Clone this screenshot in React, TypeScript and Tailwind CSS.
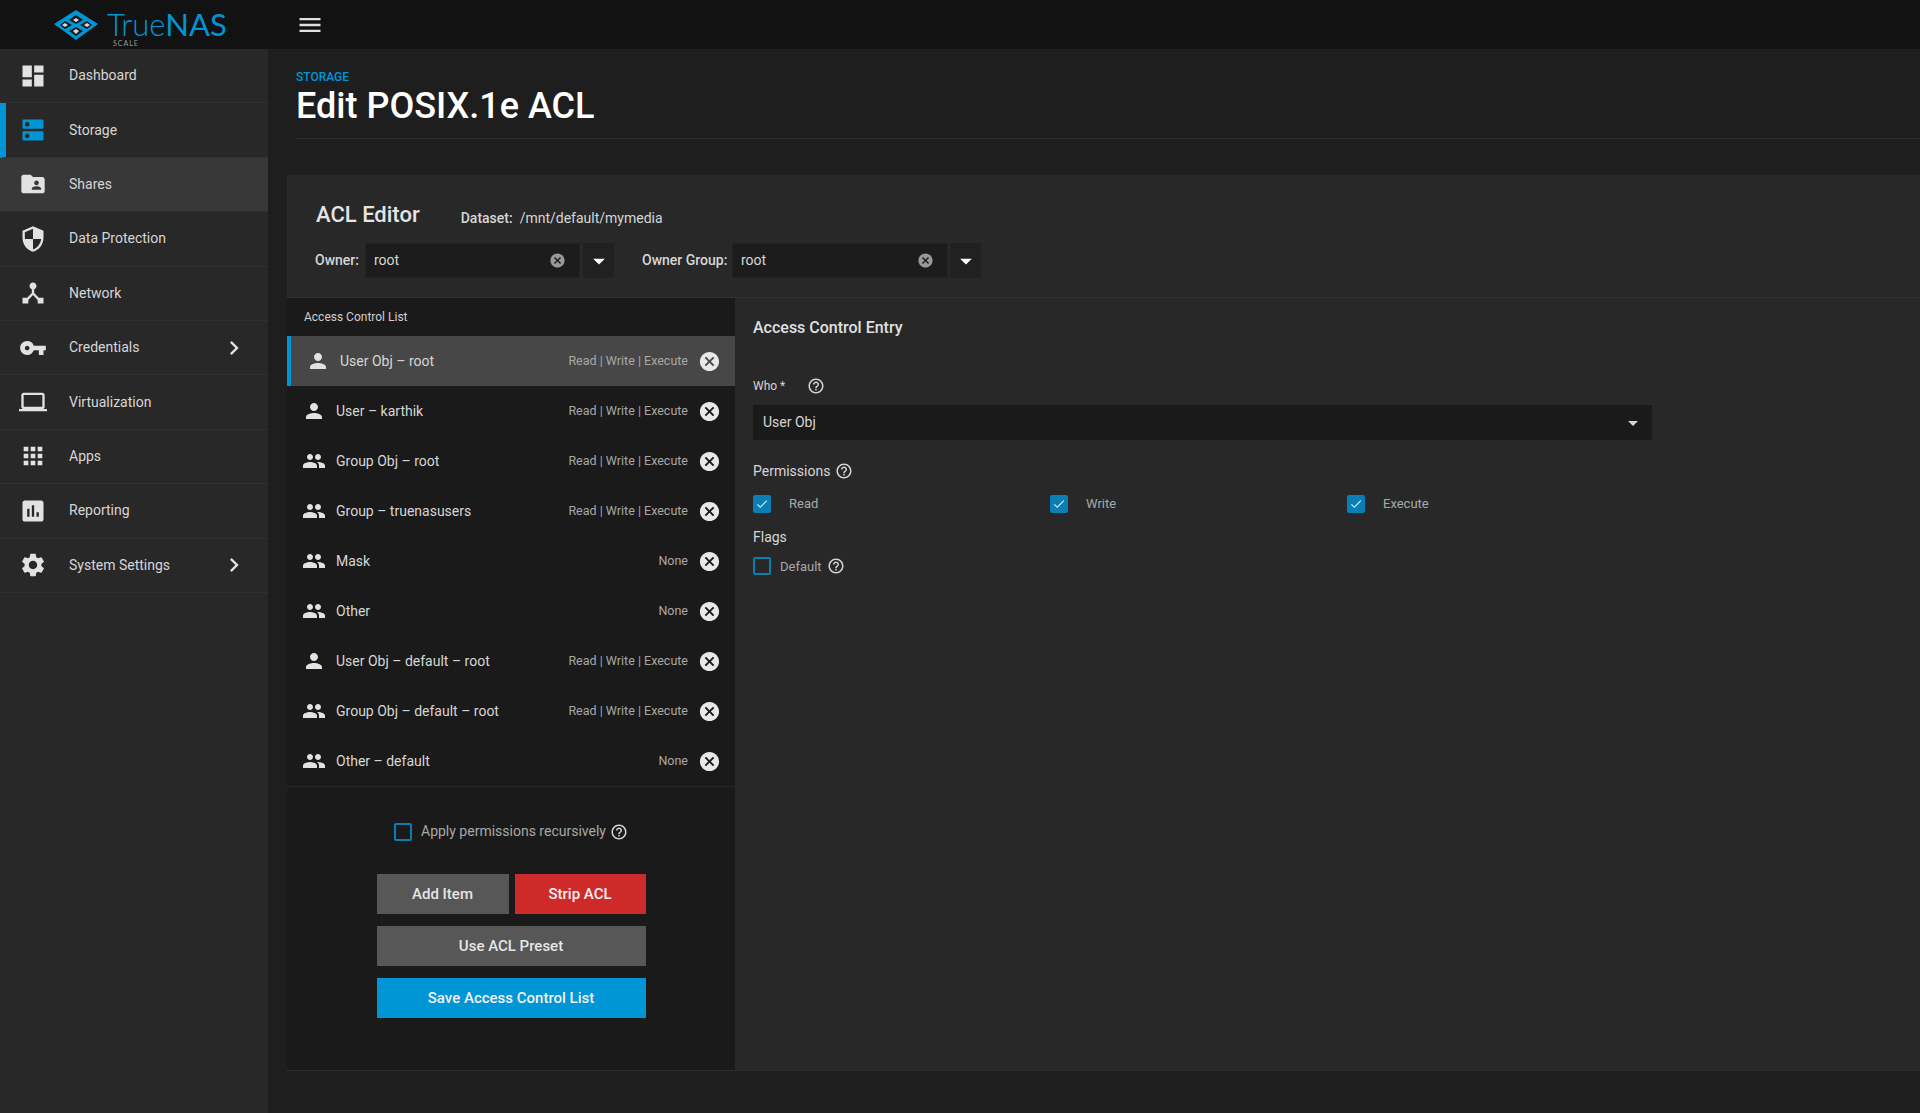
import React from 'react';
import {
  MdDashboard,
  MdDns,
  MdFolderShared,
  MdSecurity,
  MdDeviceHub,
  MdVpnKey,
  MdLaptop,
  MdApps,
  MdInsertChart,
  MdSettings,
  MdChevronRight,
  MdPerson,
  MdPeople,
  MdCancel,
  MdHelpOutline,
  MdArrowDropDown,
  MdCheck,
  MdMenu,
} from 'react-icons/md';

const navItems = [
  { label: 'Dashboard', icon: MdDashboard },
  { label: 'Storage', icon: MdDns, active: true },
  { label: 'Shares', icon: MdFolderShared, hover: true },
  { label: 'Data Protection', icon: MdSecurity },
  { label: 'Network', icon: MdDeviceHub },
  { label: 'Credentials', icon: MdVpnKey, more: true },
  { label: 'Virtualization', icon: MdLaptop },
  { label: 'Apps', icon: MdApps },
  { label: 'Reporting', icon: MdInsertChart },
  { label: 'System Settings', icon: MdSettings, more: true },
];

const aclItems = [
  { label: 'User Obj – root', perms: 'Read | Write | Execute', icon: MdPerson, selected: true },
  { label: 'User – karthik', perms: 'Read | Write | Execute', icon: MdPerson },
  { label: 'Group Obj – root', perms: 'Read | Write | Execute', icon: MdPeople },
  { label: 'Group – truenasusers', perms: 'Read | Write | Execute', icon: MdPeople },
  { label: 'Mask', perms: 'None', icon: MdPeople },
  { label: 'Other', perms: 'None', icon: MdPeople },
  { label: 'User Obj – default – root', perms: 'Read | Write | Execute', icon: MdPerson },
  { label: 'Group Obj – default – root', perms: 'Read | Write | Execute', icon: MdPeople },
  { label: 'Other – default', perms: 'None', icon: MdPeople },
];

function Logo() {
  return (
    <svg width="46" height="32" viewBox="0 0 46 32" className="shrink-0">
      <polygon points="23,1 45,15 23,31 1,15" fill="#0095d5" />
      <polygon points="23,6 30,11 23,15 16,11" fill="#1a1a1a" />
      <polygon points="12,12 19,16 12,20 7,16" fill="#1a1a1a" />
      <polygon points="34,12 39,16 34,20 27,16" fill="#1a1a1a" />
      <polygon points="23,18 30,22 23,27 16,22" fill="#1a1a1a" />
      <polygon points="23,9 26,11 23,13 20,11" fill="#d8d8d8" />
      <polygon points="12,14 15,16 12,18 9,16" fill="#d8d8d8" />
      <polygon points="34,14 37,16 34,18 31,16" fill="#d8d8d8" />
      <polygon points="23,20 26,22 23,25 20,22" fill="#d8d8d8" />
    </svg>
  );
}

function Checkbox({ checked }: { checked?: boolean }) {
  return (
    <span
      className={`flex h-[18px] w-[18px] shrink-0 items-center justify-center rounded-[2px] border-2 border-[#0a7fb5] ${
        checked ? 'bg-[#0a7fb5]' : ''
      }`}
    >
      {checked && <MdCheck size={14} className="text-[#d8eef8]" />}
    </span>
  );
}

export default function App() {
  return (
    <div className="flex h-[1113px] w-[1920px] flex-col overflow-hidden bg-[#1e1e1e] font-['Roboto',sans-serif] text-[14px] text-[#d6d6d6]">
      <header className="flex h-[49px] shrink-0 items-center bg-[#121212]">
        <div className="flex w-[296px] items-center pl-[53px]">
          <Logo />
          <div className="relative ml-[8px] flex font-['Lato',sans-serif] text-[31px] leading-none text-[#0095d5]">
            <span className="font-light">True</span>
            <span>NAS</span>
            <span className="absolute left-[6px] top-[31px] text-[7px] tracking-[1px] text-[#9a9a9a]">SCALE</span>
          </div>
        </div>
        <MdMenu size={28} className="text-[#e0e0e0]" />
      </header>

      <div className="flex min-h-0 flex-1">
        <aside className="w-[268px] shrink-0 bg-[#282828]">
          {navItems.map((item) => (
            <div
              key={item.label}
              className={`flex h-[54.4px] items-center border-b border-[#303030] pr-[20px] ${
                item.active ? 'border-l-[6px] border-l-[#0095d5] pl-[13px]' : 'pl-[19px]'
              } ${item.hover ? 'bg-[#383838]' : ''}`}
            >
              <item.icon size={28} className={item.active ? 'text-[#0095d5]' : 'text-[#e2e2e2]'} />
              <span className="ml-[22px] flex-1">{item.label}</span>
              {item.more && <MdChevronRight size={28} className="text-[#e2e2e2]" />}
            </div>
          ))}
        </aside>

        <main className="flex min-w-0 flex-1 flex-col pb-[42px] pl-[19px]">
          <div className="ml-[9px] h-[90px] shrink-0 border-b border-[#2c2c2c] pt-[21px]">
            <div className="text-[12px] font-medium leading-[14px] text-[#0095d5]">STORAGE</div>
            <h1 className="mt-[1px] text-[36px] font-medium leading-[42px] text-white">Edit POSIX.1e ACL</h1>
          </div>

          <section className="mt-[36px] flex min-h-0 flex-1 flex-col border-b border-[#2f2f2f] bg-[#282828]">
            <div className="h-[123px] shrink-0 border-b border-[#303030] px-[29px]">
              <div className="flex h-[63px] items-end pb-[8px]">
                <h2 className="text-[22px] font-medium leading-[30px] text-[#e4e4e4]">ACL Editor</h2>
                <span className="ml-[41px] pb-[1px] font-medium">Dataset:</span>
                <span className="ml-[7px] pb-[1px]">/mnt/default/mymedia</span>
              </div>
              <div className="mt-[5px] flex items-center">
                <label className="ml-[-1px] w-[50px] font-medium">Owner:</label>
                <div className="flex h-[35px] w-[215px] items-center justify-between border border-[#222] bg-[#1c1c1c] pl-[8px] pr-[13px]">
                  <span>root</span>
                  <MdCancel size={17} className="text-[#999]" />
                </div>
                <button className="ml-[3px] flex h-[35px] w-[31px] items-center justify-center bg-[#212121]">
                  <MdArrowDropDown size={28} className="text-white" />
                </button>
                <label className="ml-[28px] w-[90px] font-medium">Owner Group:</label>
                <div className="flex h-[35px] w-[216px] items-center justify-between border border-[#222] bg-[#1c1c1c] pl-[8px] pr-[13px]">
                  <span>root</span>
                  <MdCancel size={17} className="text-[#999]" />
                </div>
                <button className="ml-[2px] flex h-[35px] w-[31px] items-center justify-center bg-[#212121]">
                  <MdArrowDropDown size={28} className="text-white" />
                </button>
              </div>
            </div>

            <div className="flex min-h-0 flex-1">
              <div className="flex w-[448px] shrink-0 flex-col bg-[#1a1a1a]">
                <div className="flex h-[38px] shrink-0 items-center pl-[17px] text-[12px] text-[#d0d0d0]">Access Control List</div>
                <div className="border-b border-[#262626]">
                  {aclItems.map((item) => (
                    <div
                      key={item.label}
                      className={`flex h-[50px] items-center pl-[15px] pr-[14px] ${
                        item.selected ? 'border-l-[4px] border-l-[#0095d5] bg-[#474747] pl-[11px]' : ''
                      }`}
                    >
                      <span className="flex w-[24px] justify-center">
                        <item.icon size={24} className="text-[#e2e2e2]" />
                      </span>
                      <span className="ml-[10px] flex-1 text-[#d6d6d6]">{item.label}</span>
                      <span className="text-[12.5px] text-[#a8a8a8]">{item.perms}</span>
                      <MdCancel size={23} className="ml-[10px] text-[#e8e8e8]" />
                    </div>
                  ))}
                </div>
                <div className="flex flex-col items-center">
                  <div className="mt-[34px] flex items-center">
                    <Checkbox />
                    <span className="ml-[9px] text-[#a8a8a8]">Apply permissions recursively</span>
                    <MdHelpOutline size={18} className="ml-[4px] text-[#d6d6d6]" />
                  </div>
                  <div className="mt-[32px] grid w-[269px] grid-cols-[132px_131px] gap-x-[6px] gap-y-[12px] text-[15px] font-medium">
                    <button className="h-[40px] bg-[#575757] text-[#e6e6e6]">Add Item</button>
                    <button className="h-[40px] bg-[#cf2a2a] text-[#f2f2f2]">Strip ACL</button>
                    <button className="col-span-2 h-[40px] bg-[#575757] text-[#e6e6e6]">Use ACL Preset</button>
                    <button className="col-span-2 h-[40px] bg-[#0095d5] text-[#f2f2f2]">Save Access Control List</button>
                  </div>
                </div>
              </div>

              <div className="flex-1 pl-[18px]">
                <h3 className="mt-[19px] text-[16px] font-medium leading-[22px] text-[#e0e0e0]">Access Control Entry</h3>
                <div className="mt-[37px] flex h-[20px] items-center text-[12px]">
                  <span className="w-[54px]">Who *</span>
                  <MdHelpOutline size={18} className="text-[#d6d6d6]" />
                </div>
                <div className="mt-[9px] flex h-[35px] w-[899px] items-center justify-between bg-[#1a1a1a] pl-[10px] pr-[7px]">
                  <span>User Obj</span>
                  <MdArrowDropDown size={24} className="text-[#d6d6d6]" />
                </div>
                <div className="mt-[21px] flex h-[20px] items-center">
                  <span>Permissions</span>
                  <MdHelpOutline size={18} className="ml-[5px] text-[#d6d6d6]" />
                </div>
                <div className="mt-[13px] grid w-[891px] grid-cols-3 text-[13px] text-[#a8a8a8]">
                  {['Read', 'Write', 'Execute'].map((name) => (
                    <div key={name} className="flex items-center">
                      <Checkbox checked />
                      <span className="ml-[18px]">{name}</span>
                    </div>
                  ))}
                </div>
                <div className="mt-[13px] leading-[20px]">Flags</div>
                <div className="mt-[10px] flex items-center text-[13px] text-[#a8a8a8]">
                  <Checkbox />
                  <span className="ml-[9px]">Default</span>
                  <MdHelpOutline size={18} className="ml-[5px] text-[#d6d6d6]" />
                </div>
              </div>
            </div>
          </section>
        </main>
      </div>
    </div>
  );
}
